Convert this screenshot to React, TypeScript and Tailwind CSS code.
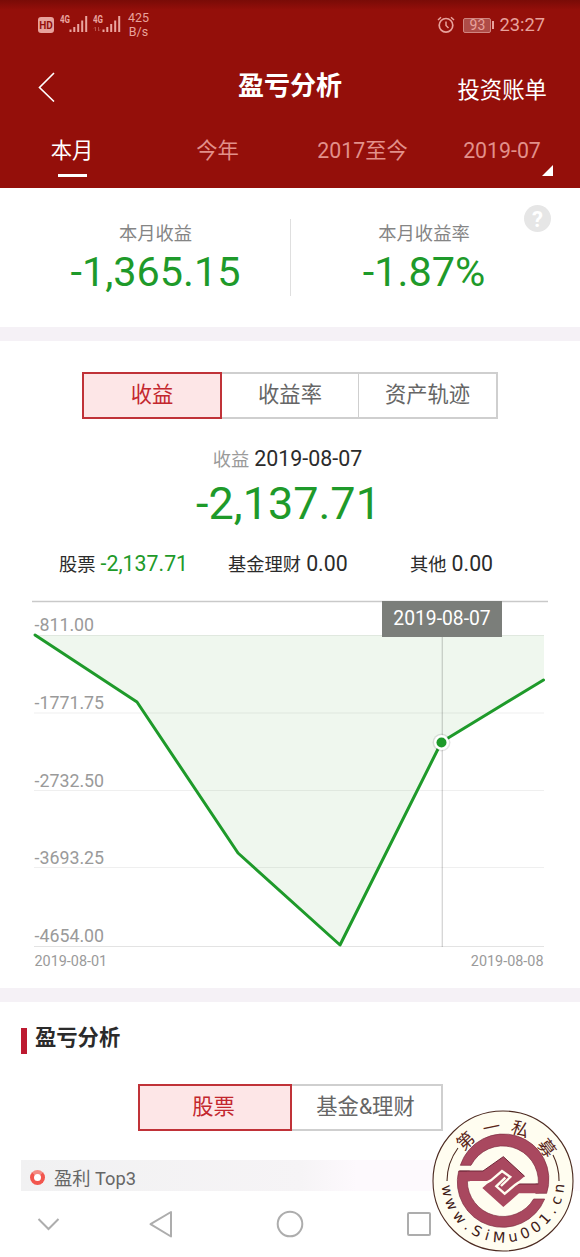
const PERIODS = [
  { label: "本月", box: "w-[144px]", active: true },
  { label: "今年", box: "w-[147px]", active: false },
  { label: "2017至今", box: "w-[143px]", active: false },
  { label: "2019-07", box: "w-[136px]", active: false },
];

const BREAKDOWN = [
  { label: "股票", value: "-2,137.71", box: "ml-[59px] w-[169px]", color: "text-[#1e9a2a]" },
  { label: "基金理财", value: "0.00", box: "w-[182px]", color: "text-[#2b2b2b]" },
  { label: "其他", value: "0.00", box: "", color: "text-[#2b2b2b]" },
];

const AXIS = ["-811.00", "-1771.75", "-2732.50", "-3693.25", "-4654.00"];
const GRID_Y = [635.5, 713, 790.5, 867.5, 946.5];

function Signal({ muted }: { muted?: boolean }) {
  return (
    <svg width="28" height="18" viewBox="0 0 28 18" className="shrink-0">
      <text x="0" y="8" fontSize="10" fontWeight="700" fill="#eaa6a0" textLength="10" lengthAdjust="spacingAndGlyphs">
        4G
      </text>
      {muted && <path d="M2.500 12v4M1 13.500l1.500-1.500M5.500 16v-4M7 14.500l-1.500 1.500" stroke="#b9524c" fill="none" />}
      <path d="M10.500 14.500V17M14.300 12V17M18.200 9V17M22.200 5.500V17M26.200 1V17" stroke="#eaa6a0" strokeWidth="2" />
    </svg>
  );
}

function StatusBar() {
  return (
    <div className="flex h-[50px] items-center bg-linear-to-b from-[#790b07] to-[#940f0a] to-20% pl-[38px] pr-[35px] text-[#e8a29c]">
      <div className="flex h-4 w-4 items-center justify-center rounded-[3px] bg-[#e8a29c] text-[10px] font-bold text-[#940f0a]">
        HD
      </div>
      <div className="ml-[6px] flex gap-[5px] pb-0.5">
        <Signal />
        <Signal muted />
      </div>
      <div className="ml-[7px] text-center text-[12.5px] leading-[14px]">
        425
        <br />
        B/s
      </div>
      <svg width="18" height="18" viewBox="0 0 18 18" className="ml-auto" fill="none" stroke="currentColor">
        <circle cx="9" cy="9.300" r="6.800" strokeWidth="1.700" />
        <path d="M9 5.500V9.500L11.500 12M1 4L4 1.200M17 4L14 1.200" strokeWidth="1.500" />
      </svg>
      <div className="ml-2 flex items-center">
        <div className="flex h-[15px] w-7 items-center justify-center rounded-[2px] border border-[#d08580] bg-[#ae4c47] text-[14px] leading-none">
          93
        </div>
        <div className="ml-px h-2 w-0.5 bg-[#e8a29c]" />
      </div>
      <div className="ml-[5px] text-[18.3px] leading-none">23:27</div>
    </div>
  );
}

function Header() {
  return (
    <header className="h-[188px] bg-[#940f0a]">
      <StatusBar />
      <div className="flex h-[70px] items-center">
        <div className="w-[193px] pl-[38px] pt-1">
          <svg width="18" height="30" viewBox="0 0 18 30" fill="none" stroke="#fff" strokeWidth="1.600">
            <path d="M16 1L1.500 15.500L16 29.500" />
          </svg>
        </div>
        <h1 className="w-[194px] pt-[2px] text-center text-[26px] font-bold leading-none text-white">盈亏分析</h1>
        <div className="w-[160px] pt-[10px] text-right text-[22.4px] leading-none text-white">投资账单</div>
      </div>
      <nav className="flex h-[68px]">
        {PERIODS.map((p) => (
          <div
            key={p.label}
            className={`flex flex-col items-center pt-[16px] text-[21.3px] leading-[30px] ${p.box} ${
              p.active ? "text-white" : "text-[#e2908a]"
            }`}
          >
            {p.label}
            {p.active && <span className="mt-[8px] h-[3px] w-[29px] bg-white" />}
            {p.label === "2019-07" && (
              <svg width="11" height="11" className="-mt-px ml-[90px] shrink-0">
                <path d="M11 0V11H0Z" fill="#fff" />
              </svg>
            )}
          </div>
        ))}
      </nav>
    </header>
  );
}

function Summary() {
  return (
    <section className="flex h-[139px] pt-[31px] text-center">
      <div className="w-[290px] pl-[21px] pt-px">
        <div className="text-[18.3px] leading-7 text-[#858585]">本月收益</div>
        <div className="text-[41.4px] leading-[49px] text-[#1e9a2a]">-1,365.15</div>
      </div>
      <div className="h-[77px] w-px bg-[#dfdfdf]" />
      <div className="w-[266px] pt-px">
        <div className="text-[18.3px] leading-7 text-[#858585]">本月收益率</div>
        <div className="text-[41.4px] leading-[49px] text-[#1e9a2a]">-1.87%</div>
      </div>
      <div className="-ml-[33px] -mt-3.5 flex h-[27px] w-[27px] items-center justify-center rounded-full bg-[#e6e6e6] pt-[2px] text-[22px] font-bold leading-none text-white">
        ?
      </div>
    </section>
  );
}

function Chart() {
  return (
    <div className="relative ml-8 mt-[22px] h-[380px] w-[516px]">
      <svg width="516" height="380" viewBox="32 600 516 380" className="block overflow-visible">
        <path d="M32 601.500H548" stroke="#c9c9c9" strokeWidth="1.500" />
        {GRID_Y.map((y, i) => (
          <path key={y} d={`M34 ${y}H544`} stroke={i === 4 ? "#e3e3e3" : "#efefef"} />
        ))}
        <path d="M35 635L137 702L238 853L340 945L441.500 742L544 680V635Z" fill="#2a9a1e" fillOpacity="0.075" />
        <path d="M442.300 636V947" stroke="#000" strokeOpacity="0.17" strokeWidth="1.300" />
        <path
          d="M35 635L137 702L238 853L340 945L441.500 742L543.500 680"
          fill="none"
          stroke="#1e9a2a"
          strokeWidth="3"
          strokeLinecap="round"
          strokeLinejoin="round"
        />
        <circle cx="441.500" cy="742.500" r="9" fill="#000" fillOpacity="0.1" />
        <circle cx="441.500" cy="742.500" r="7.500" fill="#fff" />
        <circle cx="441.500" cy="742.500" r="5" fill="#1e9a2a" />
        {AXIS.map((label, i) => (
          <text key={label} x="34.500" y={631 + i * 77.8} fontSize="17.800" fill="#9a9a9a">
            {label}
          </text>
        ))}
        <text x="34.500" y="966" fontSize="14.400" fill="#9a9a9a">
          2019-08-01
        </text>
        <text x="543.500" y="966" fontSize="14.400" fill="#9a9a9a" textAnchor="end">
          2019-08-08
        </text>
      </svg>
      <div className="absolute left-[350px] top-[1px] h-[36px] w-[120px] bg-[#7b7e7a] text-center text-[19.3px] leading-[35px] text-white">
        2019-08-07
      </div>
    </div>
  );
}

function Performance() {
  return (
    <section className="h-[647px] pt-[31px]">
      <div className="ml-[82px] flex h-[47px] w-[416px] text-center text-[21.3px] leading-[42px] text-[#666]">
        <div className="w-[140px] border-2 border-[#c03238] bg-[#fde6e7] text-[#c3272e]">收益</div>
        <div className="w-[136px] border-y-2 border-[#cfcfcf]">收益率</div>
        <div className="w-[140px] border-2 border-l border-[#cfcfcf]">资产轨迹</div>
      </div>
      <div className="mt-[25px] flex h-[30px] items-baseline justify-center gap-[5px] pr-[5px] leading-[30px]">
        <span className="text-[18.3px] text-[#9a9a9a]">收益</span>
        <span className="text-[21.4px] text-[#2b2b2b]">2019-08-07</span>
      </div>
      <div className="pr-[3px] pt-px text-center text-[45px] leading-[58px] text-[#1e9a2a]">-2,137.71</div>
      <div className="mt-[16px] flex h-[29px] leading-[30px]">
        {BREAKDOWN.map((b) => (
          <div key={b.label} className={`flex items-baseline gap-[5px] ${b.box}`}>
            <span className="text-[18.3px] text-[#2b2b2b]">{b.label}</span>
            <span className={`text-[21.3px] ${b.color}`}>{b.value}</span>
          </div>
        ))}
      </div>
      <Chart />
    </section>
  );
}

function Analysis() {
  return (
    <section className="h-[189px] pt-[20px]">
      <div className="flex items-center pl-[21px]">
        <div className="mt-[5px] h-[26px] w-[6px] bg-[#bd1a31]" />
        <h2 className="ml-[8px] text-[21.3px] font-bold leading-[32px] text-[#2b2b2b]">盈亏分析</h2>
      </div>
      <div className="ml-[138px] mt-[30px] flex h-[47px] w-[305px] text-center text-[21.3px] leading-[42px] text-[#666]">
        <div className="w-[154px] border-2 border-[#c03238] bg-[#fde6e7] pr-[3px] text-[#c3272e]">股票</div>
        <div className="w-[151px] border-2 border-l-0 border-[#cfcfcf] pr-[2px]">基金&理财</div>
      </div>
      <div className="ml-[21px] mt-[29px] flex h-[31px] items-center bg-linear-to-r from-[#f1f1f2] via-[#f6f4f6] via-50% to-[#fdf9fd] to-60% pl-[9px]">
        <div className="mt-[4px] h-[15px] w-[15px] rounded-full border-4 border-[#f2564e] border-t-[#f48a82] bg-white" />
        <span className="ml-[9px] pt-[7px] text-[18.3px] leading-[30px] text-[#666]">盈利 Top3</span>
      </div>
    </section>
  );
}

function SystemNav() {
  return (
    <svg width="580" height="66" viewBox="0 1191 580 66" className="block" fill="none" stroke="#adadad" strokeWidth="2">
      <path d="M38.500 1219L48.500 1229L58.500 1219" />
      <path d="M171 1212V1236.500L150.500 1224.200Z" strokeLinejoin="round" />
      <circle cx="290" cy="1224" r="12.300" />
      <rect x="408" y="1213" width="22" height="22" rx="1" />
    </svg>
  );
}

// angles in degrees, clockwise from the top
const TOP_CHARS = [
  { c: "第", a: -43 },
  { c: "一", a: -12 },
  { c: "私", a: 18.5 },
  { c: "募", a: 53 },
];

// angles in degrees, clockwise from the bottom
const SITE = "www.SiMu001.cn";
const SITE_ANGLES = [80, 66, 50, 38, 27.5, 16, 4, -10, -23, -35.5, -48, -59, -70, -82.5];

function Seal() {
  return (
    <svg width="142" height="142" viewBox="-71 -71 142 142" className="absolute left-[432px] top-[1110px]">
      <circle r="70" fill="#fffdf0" stroke="#4c2a20" strokeWidth="1.100" />
      <path d="M-56 0A56 56 0 0 1 -45 -33M56 0A56 56 0 0 0 50 -26" fill="none" stroke="#4c2a20" strokeWidth="1.100" />
      {TOP_CHARS.map(({ c, a }) => (
        <text key={c} transform={`rotate(${a}) translate(0 -48.500)`} textAnchor="middle" fontSize="17.500" fill="#5a2519">
          {c}
        </text>
      ))}
      {SITE.split("").map((c, i) => (
        <text
          key={i}
          transform={`rotate(${SITE_ANGLES[i]}) translate(0 61.500)`}
          textAnchor="middle"
          fontSize="14.500"
          fill="#3f2018"
          className="font-['DejaVu_Sans']"
        >
          {c}
        </text>
      ))}
      <g transform="scale(0.3333) translate(-100 -94)">
        <g fill="#a9485f" stroke="#7c2c40" strokeWidth="2">
          <path d="M-28 47A136 136 0 0 1 231 131H198V103H206A107 107 0 0 0 4 47Z" />
          <path d="M225 148A136 136 0 0 1 -33 64H0V94H-7A107 107 0 0 0 192 148Z" />
        </g>
        <path
          d="M-8 64H40L101 21L165 80L137 103H208V131H148L101 172L38 115L62 94H-8Z"
          fill="#a9485f"
        />
        <path d="M-31 64H40L101 21L165 80M137 103H206" fill="none" stroke="#6d2437" strokeWidth="3" />
        <path
          d="M52 98L64 92L97 64L122 82L94 109M148 98L137 105L105 132L80 110L107 84"
          fill="none"
          stroke="#fffdf0"
          strokeWidth="7"
        />
      </g>
    </svg>
  );
}

export default function App() {
  return (
    <div className="relative h-[1257px] w-[580px] overflow-hidden bg-white font-[Roboto,'Noto_Sans_CJK_SC',sans-serif]">
      <Header />
      <Summary />
      <div className="h-[14px] bg-[#f5f1f6]" />
      <Performance />
      <div className="h-[14px] bg-[#f5f1f6]" />
      <Analysis />
      <SystemNav />
      <Seal />
    </div>
  );
}
